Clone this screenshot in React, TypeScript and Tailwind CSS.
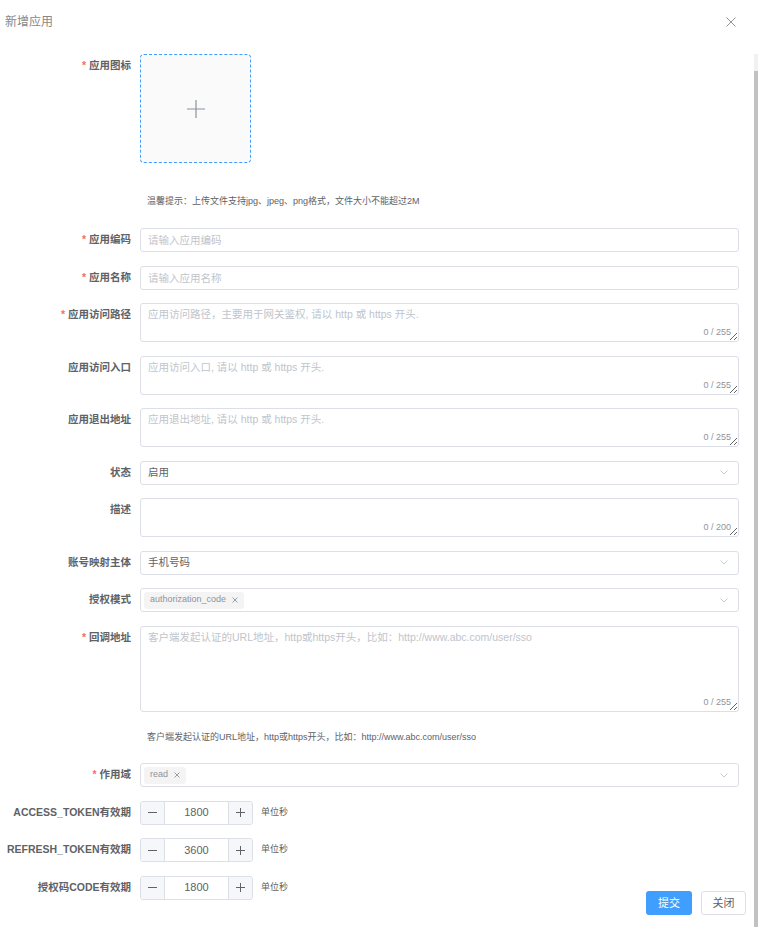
import React from 'react';

const font = { fontFamily: '"Liberation Sans", Arial, "Noto Sans CJK SC", sans-serif' };

const Label = ({ text, required }: { text: string; required?: boolean }) => (
    <div className="flex h-[24px] w-[140px] shrink-0 items-center justify-end pr-[9px] text-[10.5px] font-bold text-[#606266]">
        {required && <span className="mr-[3px] text-[#f56c6c]">*</span>}
        {text}
    </div>
);

const Chevron = () => (
    <svg width="8" height="5" viewBox="0 0 8 5" className="shrink-0">
        <path d="M0.5 0.5 L4 4 L7.5 0.5" fill="none" stroke="#c0c4cc" strokeWidth="0.9" />
    </svg>
);

const Input = ({ placeholder }: { placeholder: string }) => (
    <input
        placeholder={placeholder}
        className="block h-[24px] w-full rounded-[3px] border border-[#dcdfe6] px-[7px] text-[10.5px] text-[#606266] outline-none placeholder:text-[#c0c4cc]"
    />
);

const TextArea = ({ placeholder, max, h }: { placeholder?: string; max: number; h: string }) => (
    <div className={`relative w-full ${h}`}>
        <textarea
            placeholder={placeholder}
            className="block h-full w-full resize-y rounded-[3px] border border-[#dcdfe6] px-[7px] py-[3px] text-[10.5px] leading-[1.5] text-[#606266] outline-none placeholder:text-[#c0c4cc]"
        />
        <span className="absolute bottom-[4px] right-[8px] text-[9px] leading-[12px] text-[#909399]">0 / {max}</span>
    </div>
);

const Select = ({ children }: { children: React.ReactNode }) => (
    <div className="flex h-[24px] w-full items-center rounded-[3px] border border-[#dcdfe6] pl-[3px] pr-[10px]">
        <div className="flex flex-1 items-center">{children}</div>
        <Chevron />
    </div>
);

const Tag = ({ text }: { text: string }) => (
    <span className="flex h-[17px] items-center gap-[6px] rounded-[3px] bg-[#f4f4f5] px-[6px] text-[9px] text-[#909399]">
        {text}
        <svg width="6" height="6" viewBox="0 0 6 6">
            <path d="M0.5 0.5 L5.5 5.5 M5.5 0.5 L0.5 5.5" stroke="#909399" strokeWidth="0.9" />
        </svg>
    </span>
);

const NumberInput = ({ value }: { value: string }) => (
    <div className="flex h-[24px] items-center gap-[8px]">
        <div className="flex h-[24px] w-[113px] rounded-[3px] border border-[#dcdfe6] text-[#606266]">
            <div className="flex w-[24px] items-center justify-center rounded-l-[3px] border-r border-[#dcdfe6] bg-[#f5f7fa]">
                <div className="h-[1px] w-[9px] bg-[#606266]" />
            </div>
            <div className="flex flex-1 items-center justify-center text-[11px]">{value}</div>
            <div className="flex w-[24px] items-center justify-center rounded-r-[3px] border-l border-[#dcdfe6] bg-[#f5f7fa]">
                <svg width="9" height="9" viewBox="0 0 9 9">
                    <path d="M0 4.5 H9 M4.5 0 V9" stroke="#606266" strokeWidth="1" />
                </svg>
            </div>
        </div>
        <span className="text-[9px] text-[#606266]">单位秒</span>
    </div>
);

const Row = ({ label, required, mb = 'mb-[13.5px]', children }: { label: string; required?: boolean; mb?: string; children: React.ReactNode }) => (
    <div className={`flex items-start ${mb}`}>
        <Label text={label} required={required} />
        <div className="flex-1">{children}</div>
    </div>
);

export default function App() {
    return (
        <div style={font} className="relative flex h-[927px] w-[758px] flex-col overflow-hidden bg-white">
            {/* header */}
            <div className="flex h-[54px] shrink-0 items-start justify-between pl-[5px] pr-[22px] pt-[13px]">
                <span className="text-[12px] leading-[18px] text-[#888]">新增应用</span>
                <svg width="10" height="10" viewBox="0 0 10 10" className="mt-[4px]">
                    <path d="M0.5 0.5 L9.5 9.5 M9.5 0.5 L0.5 9.5" stroke="#909399" strokeWidth="1" />
                </svg>
            </div>

            {/* body */}
            <div className="flex min-h-0 flex-1">
                <div className="flex-1 pr-[15px]">
                    <Row label="应用图标" required mb="mb-0">
                        <div className="flex h-[109px] w-[111px] items-center justify-center rounded-[4px] border border-dashed border-[#409eff] bg-[#fafafa]">
                            <svg width="18" height="18" viewBox="0 0 18 18">
                                <path d="M0 9 H18 M9 0 V18" stroke="#8c939d" strokeWidth="1.2" />
                            </svg>
                        </div>
                    </Row>
                    <div className="mb-[19.5px] mt-[31.5px] flex h-[14px] items-center pl-[147px] text-[9px] text-[#606266]">
                        温馨提示：上传文件支持jpg、jpeg、png格式，文件大小不能超过2M
                    </div>

                    <Row label="应用编码" required>
                        <Input placeholder="请输入应用编码" />
                    </Row>
                    <Row label="应用名称" required>
                        <Input placeholder="请输入应用名称" />
                    </Row>
                    <Row label="应用访问路径" required>
                        <TextArea h="h-[39px]" max={255} placeholder="应用访问路径，主要用于网关鉴权, 请以 http 或 https 开头." />
                    </Row>
                    <Row label="应用访问入口">
                        <TextArea h="h-[39px]" max={255} placeholder="应用访问入口, 请以 http 或 https 开头." />
                    </Row>
                    <Row label="应用退出地址">
                        <TextArea h="h-[39px]" max={255} placeholder="应用退出地址, 请以 http 或 https 开头." />
                    </Row>
                    <Row label="状态">
                        <Select>
                            <span className="pl-[4px] text-[10.5px] text-[#606266]">启用</span>
                        </Select>
                    </Row>
                    <Row label="描述">
                        <TextArea h="h-[39px]" max={200} />
                    </Row>
                    <Row label="账号映射主体">
                        <Select>
                            <span className="pl-[4px] text-[10.5px] text-[#606266]">手机号码</span>
                        </Select>
                    </Row>
                    <Row label="授权模式">
                        <Select>
                            <Tag text="authorization_code" />
                        </Select>
                    </Row>
                    <Row label="回调地址" required mb="mb-0">
                        <TextArea h="h-[86px]" max={255} placeholder="客户端发起认证的URL地址，http或https开头，比如：http://www.abc.com/user/sso" />
                    </Row>
                    <div className="mb-[18.5px] mt-[19px] flex h-[14px] items-center pl-[147px] text-[9px] text-[#606266]">
                        客户端发起认证的URL地址，http或https开头，比如：http://www.abc.com/user/sso
                    </div>

                    <Row label="作用域" required>
                        <Select>
                            <Tag text="read" />
                        </Select>
                    </Row>
                    <Row label="ACCESS_TOKEN有效期">
                        <NumberInput value="1800" />
                    </Row>
                    <Row label="REFRESH_TOKEN有效期">
                        <NumberInput value="3600" />
                    </Row>
                    <Row label="授权码CODE有效期">
                        <NumberInput value="1800" />
                    </Row>
                </div>

                {/* scrollbar */}
                <div className="flex w-[4px] shrink-0 flex-col bg-[#f1f1f1]">
                    <div className="h-[17px]" />
                    <div className="flex-1 bg-[#c1c1c1]" />
                </div>
            </div>

            {/* footer overlays the scrolled content */}
            <div className="absolute bottom-[12px] right-[12px] flex gap-[9px]">
                <button className="h-[24px] w-[46px] rounded-[3px] bg-[#409eff] text-[11px] text-white">提交</button>
                <button className="h-[24px] w-[45px] rounded-[3px] border border-[#dcdfe6] bg-white text-[11px] text-[#606266]">关闭</button>
            </div>
        </div>
    );
}
